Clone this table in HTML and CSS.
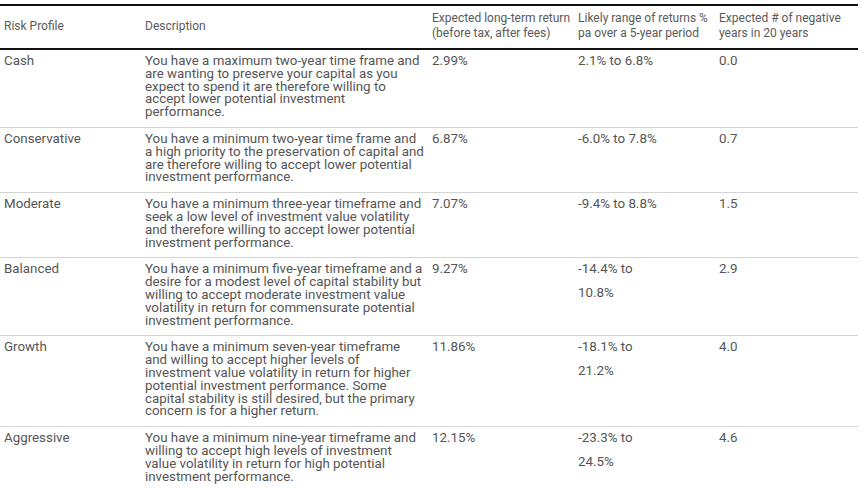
FILE: index.html
```html
<!DOCTYPE html>
<html lang="en">
<head>
<meta charset="utf-8">
<title>Risk Profiles</title>
<link rel="stylesheet" href="styles.css">
</head>
<body>
<table class="risk-table">
  <colgroup>
    <col class="c-profile">
    <col class="c-desc">
    <col class="c-return">
    <col class="c-range">
    <col class="c-neg">
  </colgroup>
  <thead>
    <tr>
      <th>Risk Profile</th>
      <th>Description</th>
      <th>Expected long-term return<br>(before tax, after fees)</th>
      <th>Likely range of returns %<br>pa over a 5-year period</th>
      <th>Expected # of negative<br>years in 20 years</th>
    </tr>
  </thead>
  <tbody>
    <tr>
      <td class="name">Cash</td>
      <td class="desc">You have a maximum two-year time frame and are wanting to preserve your capital as you expect to spend it are therefore willing to accept lower potential investment performance.</td>
      <td class="num">2.99%</td>
      <td class="num">2.1% to 6.8%</td>
      <td class="num">0.0</td>
    </tr>
    <tr>
      <td class="name">Conservative</td>
      <td class="desc">You have a minimum two-year time frame and a high priority to the preservation of capital and are therefore willing to accept lower potential investment performance.</td>
      <td class="num">6.87%</td>
      <td class="num">-6.0% to 7.8%</td>
      <td class="num">0.7</td>
    </tr>
    <tr>
      <td class="name">Moderate</td>
      <td class="desc">You have a minimum three-year timeframe and seek a low level of investment value volatility and therefore willing to accept lower potential investment performance.</td>
      <td class="num">7.07%</td>
      <td class="num">-9.4% to 8.8%</td>
      <td class="num">1.5</td>
    </tr>
    <tr>
      <td class="name">Balanced</td>
      <td class="desc">You have a minimum five-year timeframe and a desire for a modest level of capital stability but willing to accept moderate investment value volatility in return for commensurate potential investment performance.</td>
      <td class="num">9.27%</td>
      <td class="num"><span class="part">-14.4% to</span><span class="part">10.8%</span></td>
      <td class="num">2.9</td>
    </tr>
    <tr>
      <td class="name">Growth</td>
      <td class="desc">You have a minimum seven-year timeframe and willing to accept higher levels of investment value volatility in return for higher potential investment performance. Some capital stability is still desired, but the primary concern is for a higher return.</td>
      <td class="num">11.86%</td>
      <td class="num"><span class="part">-18.1% to</span><span class="part">21.2%</span></td>
      <td class="num">4.0</td>
    </tr>
    <tr>
      <td class="name">Aggressive</td>
      <td class="desc">You have a minimum nine-year timeframe and willing to accept high levels of investment value volatility in return for high potential investment performance.</td>
      <td class="num">12.15%</td>
      <td class="num"><span class="part">-23.3% to</span><span class="part">24.5%</span></td>
      <td class="num">4.6</td>
    </tr>
  </tbody>
</table>
</body>
</html>
```

FILE: styles.css
```css
html, body {
  margin: 0;
  padding: 0;
  background: #ffffff;
}

body {
  padding-top: 4px;
  font-family: Roboto, "Liberation Sans", Arial, sans-serif;
  color: #555555;
}

.risk-table {
  width: 858px;
  table-layout: fixed;
  border-collapse: collapse;
  border-spacing: 0;
}

.c-profile { width: 141px; }
.c-desc { width: 287px; }
.c-return { width: 146px; }
.c-range { width: 141px; }
.c-neg { width: 143px; }

.risk-table thead th {
  font-weight: 400;
  font-size: 12px;
  line-height: 15px;
  text-align: left;
  vertical-align: middle;
  white-space: nowrap;
  padding: 5px 4px 7px 4px;
  border-top: 2px solid #111111;
  border-bottom: 2px solid #111111;
  color: #5a5a5a;
}

.risk-table tbody td {
  font-size: 13.33px;
  line-height: 12.8px;
  vertical-align: top;
  padding: 5px 4px 8px 4px;
  border-bottom: 1px solid #d4d4d4;
}

.part {
  display: block;
}

.part + .part {
  margin-top: 11.2px;
}
```
